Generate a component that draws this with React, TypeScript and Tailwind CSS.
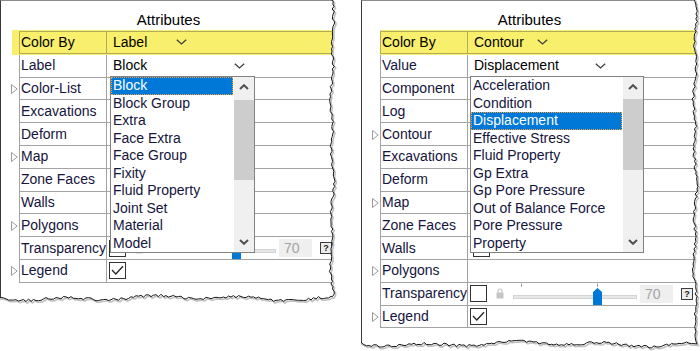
import React from "react";

type Row = {
  name: string;
  expand?: boolean;
  kind?: "combo" | "transp" | "check" | "box" | "none";
  value?: string;
};

function rng(seed: number) {
  let s = seed >>> 0;
  return () => {
    s = (Math.imul(s, 1664525) + 1013904223) >>> 0;
    return s / 4294967296;
  };
}

function Torn({ xEdge, yEdge, seed, W, H }: { xEdge: number; yEdge: number; seed: number; W: number; H: number }) {
  const r = rng(seed);
  const pts: [number, number][] = [];
  for (let y = -1; y <= yEdge; y += 2.5) {
    pts.push([xEdge + Math.sin(y / 9) * 1.1 + Math.sin(y / 23) * 0.8 + (r() - 0.5) * 2.4, y]);
  }
  for (let x = xEdge - 1; x >= -4; x -= 2.5) {
    pts.push([x, yEdge + Math.sin(x / 14) * 1.6 + Math.sin(x / 37) * 1.2 + (r() - 0.5) * 2.6]);
  }
  const line = pts.map((p) => `${p[0].toFixed(1)},${p[1].toFixed(1)}`).join(" ");
  const outside = `${W},-2 ${line} -6,${H} ${W},${H}`;
  return (
    <svg className="absolute inset-0 pointer-events-none" width={W} height={H}>
      <polygon points={outside} fill="#ffffff" />
      <polyline points={line} fill="none" stroke="#8c8c8c" strokeWidth="1.6" strokeOpacity="0.55" transform="translate(1.4,1.6)" />
      <polyline points={line} fill="none" stroke="#161616" strokeWidth="1" />
    </svg>
  );
}

function Tri() {
  return (
    <svg width="7" height="10" viewBox="0 0 7 10">
      <path d="M0.5 0.5 L6.2 5 L0.5 9.5 Z" fill="#ffffff" stroke="#9c9c9c" strokeWidth="1" />
    </svg>
  );
}

function Chev({ color = "#3a3a3a" }: { color?: string }) {
  return (
    <svg width="11" height="6" viewBox="0 0 11 6">
      <polyline points="0.8,0.8 5.5,5 10.2,0.8" fill="none" stroke={color} strokeWidth="1.2" />
    </svg>
  );
}

function ScrollArrow({ up }: { up?: boolean }) {
  return (
    <svg width="10" height="6" viewBox="0 0 10 6">
      <polyline
        points={up ? "1,5 5,1.2 9,5" : "1,1 5,4.8 9,1"}
        fill="none"
        stroke="#505050"
        strokeWidth="2"
      />
    </svg>
  );
}

function Lock() {
  return (
    <svg width="8" height="11" viewBox="0 0 8 11" className="ml-[9px] shrink-0">
      <path d="M2 4.5 V3 a2 2 0 0 1 4 0 V4.5" fill="none" stroke="#c6c6c6" strokeWidth="1.2" />
      <rect x="0.5" y="4.5" width="7" height="6" fill="#c6c6c6" />
    </svg>
  );
}

function Slider() {
  return (
    <svg width="124" height="22" viewBox="0 0 124 22" className="ml-[9px] shrink-0">
      <line x1="8.5" y1="0.5" x2="8.5" y2="4" stroke="#9a9a9a" />
      <line x1="84.5" y1="0.5" x2="84.5" y2="4" stroke="#9a9a9a" />
      <rect x="0.5" y="12.5" width="123" height="3" fill="#e7e7e7" stroke="#d3d3d3" />
      <path d="M80 9 L84.5 5 L89 9 L89 22 L80 22 Z" fill="#0078d7" />
    </svg>
  );
}

function CheckBox({ checked }: { checked?: boolean }) {
  return (
    <div className="ml-[2px] w-[17px] h-[17px] border border-[#333333] bg-white shrink-0 flex items-center justify-center">
      {checked && (
        <svg width="13" height="11" viewBox="0 0 13 11">
          <polyline points="1,5 4.8,9 12,1.2" fill="none" stroke="#222222" strokeWidth="1.3" />
        </svg>
      )}
    </div>
  );
}

function ValueContent({ row }: { row: Row }) {
  if (row.kind === "combo") {
    return (
      <div className="w-[142px] flex items-center justify-between pl-[6px] pr-[4px] text-black">
        <span>{row.value}</span>
        <Chev />
      </div>
    );
  }
  if (row.kind === "transp") {
    return (
      <div className="flex items-center h-full">
        <CheckBox />
        <Lock />
        <Slider />
        <div className="ml-[3px] w-[33px] h-[18px] bg-[#efefef] text-[#a3a3a3] text-[14px] leading-[18px] pl-[5px] shrink-0">
          70
        </div>
        <div className="ml-[8px] w-[12px] h-[12px] border border-[#3c3c3c] bg-[#ececec] text-[9px] leading-[10px] font-bold text-center text-[#222] shrink-0">
          ?
        </div>
      </div>
    );
  }
  if (row.kind === "check") return <CheckBox checked />;
  if (row.kind === "box") return <div className="ml-[3px]"><CheckBox /></div>;
  return null;
}

function PropRow({ row }: { row: Row }) {
  return (
    <div className="flex h-[22.8px]">
      <div className="w-[18px] shrink-0 flex items-center pl-[10px]">{row.expand && <Tri />}</div>
      <div className="w-[88px] shrink-0 border-l border-r border-b border-[#a3a3a3] pl-[1px] flex items-center overflow-hidden whitespace-nowrap text-[#14143c]">
        {row.name}
      </div>
      <div className="flex-1 border-b border-[#a3a3a3] flex items-center overflow-hidden whitespace-nowrap">
        <ValueContent row={row} />
      </div>
    </div>
  );
}

type PanelProps = {
  W: number;
  colorBy: string;
  rows: Row[];
  items: string[];
  hi: number;
  yellowGutter?: boolean;
  listPos: string;
  thumb: string;
  xEdge: number;
  yEdge: number;
  seed: number;
};

function Panel(p: PanelProps) {
  return (
    <div className="relative h-[351px] shrink-0" style={{ width: p.W }}>
      <div className="w-[336px] h-full bg-white border-l border-l-[#3a3a3a] border-t border-t-[#8c8c8c]">
        <div className="h-[29px] pt-[10px] text-center text-[15px] leading-[17px] text-black">Attributes</div>
        <div className="flex h-[24.8px]">
          <div className="w-[18px] shrink-0 h-full">
            {p.yellowGutter && <div className="ml-[11px] h-full bg-[#f8ef6c]" />}
          </div>
          <div className="flex-1 flex py-[1px] bg-[#f8ef6c]">
            <div className="w-[88px] shrink-0 border border-[#b3ab5a] pl-[1px] flex items-center text-black">
              Color By
            </div>
            <div className="flex-1 border-t border-b border-[#b3ab5a] flex items-center">
              <div className="w-[80px] flex items-center justify-between pl-[6px] text-black">
                <span>{p.colorBy}</span>
                <Chev />
              </div>
            </div>
          </div>
        </div>
        {p.rows.map((r) => (
          <PropRow key={r.name} row={r} />
        ))}
      </div>

      <div className={`absolute top-[76px] h-[177px] border border-[#828282] bg-white flex ${p.listPos}`}>
        <div className="flex-1 min-w-0">
          {p.items.map((it, i) =>
            i === p.hi ? (
              <div
                key={it}
                className="h-[17.5px] leading-[15.5px] mr-[1px] pl-[1px] bg-[#0078d7] text-white border border-dotted border-[#f0a040] whitespace-nowrap overflow-hidden"
              >
                {it}
              </div>
            ) : (
              <div key={it} className="h-[17.5px] leading-[17.5px] pl-[2px] text-[#14143c] whitespace-nowrap overflow-hidden">
                {it}
              </div>
            )
          )}
        </div>
        <div className="w-[20px] shrink-0 bg-[#f0f0f0] flex flex-col">
          <div className="h-[20px] flex items-center justify-center">
            <ScrollArrow up />
          </div>
          <div className={`bg-[#cdcdcd] ${p.thumb}`} />
          <div className="flex-1" />
          <div className="h-[20px] flex items-center justify-center">
            <ScrollArrow />
          </div>
        </div>
      </div>

      <Torn W={p.W} H={351} xEdge={p.xEdge} yEdge={p.yEdge} seed={p.seed} />
    </div>
  );
}

const leftRows: Row[] = [
  { name: "Label", kind: "combo", value: "Block" },
  { name: "Color-List", expand: true },
  { name: "Excavations" },
  { name: "Deform" },
  { name: "Map", expand: true },
  { name: "Zone Faces" },
  { name: "Walls" },
  { name: "Polygons", expand: true },
  { name: "Transparency", kind: "transp" },
  { name: "Legend", expand: true, kind: "check" },
];

const rightRows: Row[] = [
  { name: "Value", kind: "combo", value: "Displacement" },
  { name: "Component" },
  { name: "Log" },
  { name: "Contour", expand: true },
  { name: "Excavations" },
  { name: "Deform" },
  { name: "Map", expand: true },
  { name: "Zone Faces" },
  { name: "Walls", kind: "box" },
  { name: "Polygons", expand: true },
  { name: "Transparency", kind: "transp" },
  { name: "Legend", expand: true, kind: "check" },
];

const leftItems = [
  "Block",
  "Block Group",
  "Extra",
  "Face Extra",
  "Face Group",
  "Fixity",
  "Fluid Property",
  "Joint Set",
  "Material",
  "Model",
];

const rightItems = [
  "Acceleration",
  "Condition",
  "Displacement",
  "Effective Stress",
  "Fluid Property",
  "Gp Extra",
  "Gp Pore Pressure",
  "Out of Balance Force",
  "Pore Pressure",
  "Property",
];

export default function App() {
  return (
    <div className="w-[700px] h-[351px] bg-white flex overflow-hidden text-[14px] font-['Liberation_Sans',Arial,sans-serif]">
      <Panel
        W={361}
        colorBy="Label"
        rows={leftRows}
        items={leftItems}
        hi={0}
        yellowGutter
        listPos="left-[110px] w-[145px]"
        thumb="mt-[3px] h-[80px]"
        xEdge={332}
        yEdge={298}
        seed={7}
      />
      <Panel
        W={339}
        colorBy="Contour"
        rows={rightRows}
        items={rightItems}
        hi={2}
        listPos="left-[109px] w-[174px]"
        thumb="mt-[2px] h-[71px]"
        xEdge={334}
        yEdge={344}
        seed={23}
      />
    </div>
  );
}
